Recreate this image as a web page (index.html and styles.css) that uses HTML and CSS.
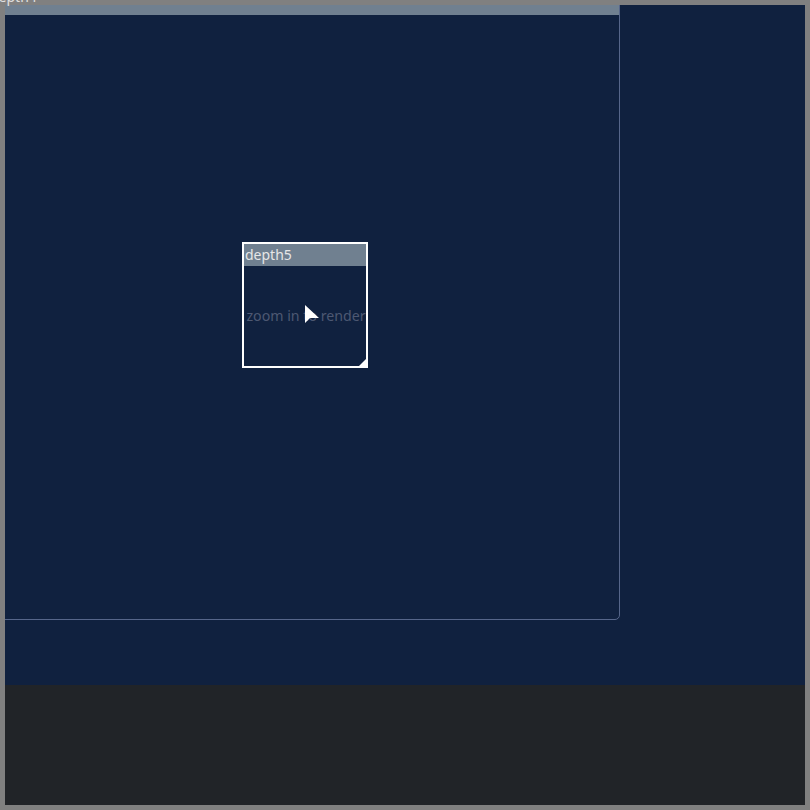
FILE: index.html
```html
<!DOCTYPE html>
<html>
<head>
<meta charset="utf-8">
<link rel="stylesheet" href="styles.css">
</head>
<body>
<div class="viewport">
  <div class="canvas">
    <div class="win win-d4">
      <div class="win-title win-title-d4"></div>
    </div>
    <div class="win win-d5">
      <div class="win-title">depth5</div>
      <div class="win-body">
        <span class="placeholder">zoom in to render</span>
        <svg class="cursor" width="16" height="22" viewBox="0 0 16 22"><path d="M1 1 L1 19 L6 14 L15 14 Z" fill="#fff"/></svg>
      </div>
      <div class="resize"></div>
    </div>
  </div>
  <div class="footer"></div>
</div>
<div class="stray-label">depth4</div>
</body>
</html>
```
FILE: styles.css
```css
html { background: #808080; }
body {
  margin: 0;
  font-family: "Noto Sans", "Open Sans", sans-serif;
  position: relative;
}
.viewport {
  margin: 5px;
  width: 800px;
  height: 800px;
  display: flex;
  flex-direction: column;
}
.canvas {
  position: relative;
  height: 680px;
  background: #10213f;
  overflow: hidden;
}
.footer {
  flex: 1;
  background: #212428;
}
.win {
  position: absolute;
  box-sizing: border-box;
  display: flex;
  flex-direction: column;
}
.win-d4 {
  left: -100px;
  top: -12px;
  width: 715px;
  height: 627px;
  border: 1px solid #56668a;
  border-radius: 5px;
}
.win-title {
  height: 22px;
  background: #708090;
  color: #e6e6e6;
  font-size: 14px;
  line-height: 22px;
  padding-left: 1px;
  white-space: nowrap;
}
.win-title-d4 { height: 21px; }
.win-d5 {
  left: 237px;
  top: 237px;
  width: 126px;
  height: 126px;
  border: 2px solid #ffffff;
}
.win-body {
  flex: 1;
  position: relative;
  display: flex;
  align-items: center;
  justify-content: center;
}
.placeholder {
  color: #4d5872;
  font-size: 14.2px;
  white-space: nowrap;
  margin-top: -2px;
  margin-left: 2px;
}
.cursor {
  position: absolute;
  left: 60px;
  top: 38px;
}
.resize {
  position: absolute;
  right: 0;
  bottom: 0;
  width: 0;
  height: 0;
  border-left: 7px solid transparent;
  border-bottom: 7px solid #ffffff;
}
.stray-label {
  position: absolute;
  left: -10px;
  top: -11px;
  font-size: 14px;
  line-height: 16px;
  color: #e0e0e0;
}
```
